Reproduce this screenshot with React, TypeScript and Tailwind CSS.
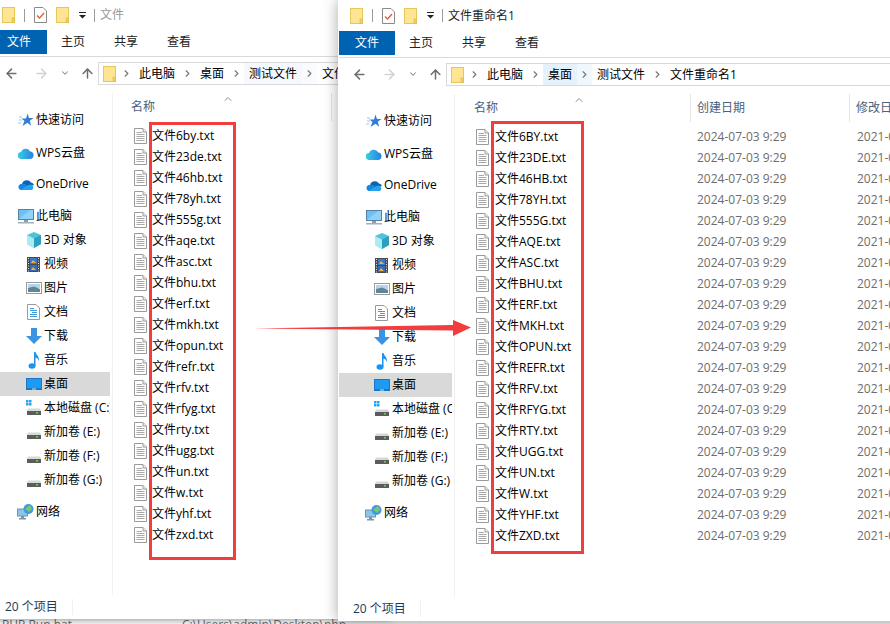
import React from "react";
import { ArrowLeft, ArrowRight, ArrowUp, ChevronDown, ChevronRight, ChevronUp } from "lucide-react";

const FolderIcon = ({ className = "" }: { className?: string }) => (
  <svg width="13" height="16" viewBox="0 0 13 16" className={className}>
    <rect x="0.5" y="0.5" width="12" height="15" fill="#fde594" stroke="#e9c65c" />
    <rect x="10" y="11" width="2.5" height="4.5" fill="#f2cf62" stroke="#e0b844" strokeWidth="0.6" />
  </svg>
);

const CheckDocIcon = () => (
  <svg width="13" height="16" viewBox="0 0 13 16">
    <path d="M0.5 0.5H9L12.5 4V15.5H0.5Z" fill="#fff" stroke="#8a8a8a" />
    <path d="M3 8.5L5.5 11L10 6" fill="none" stroke="#e8592b" strokeWidth="1.3" />
  </svg>
);

const TxtIcon = () => (
  <svg width="13" height="16" viewBox="0 0 13 16" className="shrink-0">
    <path d="M0.5 0.5H9L12.5 4V15.5H0.5Z" fill="#fff" stroke="#9a9a9a" />
    <path d="M9 0.5V4H12.5" fill="#eee" stroke="#9a9a9a" />
    <path d="M2.5 4.5H8M2.5 6.5H10.5M2.5 8.5H10.5M2.5 10.5H10.5M2.5 12.5H10.5" stroke="#a8a8a8" />
  </svg>
);

const StarIcon = () => (
  <svg width="16" height="16" viewBox="0 0 16 16">
    <path d="M9.5 1.5L11 6H15.5L11.8 8.8L13.2 13.8L9.5 10.8L4.5 14L6.5 9L3.5 6.5H8Z" fill="#2f7ed8" />
    <path d="M1 5H4M1 8H4M0 11H3" stroke="#9cc6ee" />
  </svg>
);

const WpsCloudIcon = () => (
  <svg width="16" height="12" viewBox="0 0 16 12">
    <defs>
      <linearGradient id="wps" x1="0" y1="0" x2="1" y2="0">
        <stop offset="0" stopColor="#35d0e0" />
        <stop offset="1" stopColor="#2a7fe6" />
      </linearGradient>
    </defs>
    <path d="M3.5 12A3.5 3.5 0 0 1 3 5A5 5 0 0 1 12.2 4.5A3.8 3.8 0 0 1 12.5 12Z" fill="url(#wps)" />
  </svg>
);

const OneDriveIcon = () => (
  <svg width="18" height="12" viewBox="0 0 18 12">
    <path d="M5 6A5 5 0 0 1 14 4.5A4 4 0 0 1 17 7L9 9Z" fill="#0f63b5" />
    <path d="M3.5 12A3.2 3.2 0 0 1 3.5 6H8L13 12Z" fill="#1687dc" />
    <path d="M4 12L10 7.5L13.5 6.5A3 3 0 0 1 15 12Z" fill="#25a4ee" />
  </svg>
);

const PcIcon = () => (
  <svg width="16" height="15" viewBox="0 0 16 15">
    <rect x="0.5" y="0.5" width="15" height="10" fill="#6cc0f4" stroke="#5b7fa0" />
    <path d="M1 10L12 1H15V10Z" fill="#8fd2f8" />
    <rect x="6" y="11" width="4" height="2" fill="#8aa0b4" />
    <rect x="0" y="13" width="16" height="1.5" fill="#9fb2c2" />
  </svg>
);

const CubeIcon = () => (
  <svg width="14" height="16" viewBox="0 0 14 16">
    <path d="M7 0L14 3V12L7 16L0 12V3Z" fill="#4fc3d9" />
    <path d="M0 3L7 6.5V16L0 12Z" fill="#a8ecf4" />
    <path d="M7 6.5L14 3V12L7 16Z" fill="#2f9fbf" />
  </svg>
);

const VideoIcon = () => (
  <svg width="13" height="15" viewBox="0 0 13 15">
    <rect x="0" y="0" width="13" height="15" fill="#4a4a4a" />
    <path d="M1 1.5H2M1 4H2M1 6.5H2M1 9H2M1 11.5H2M1 14H2M11 1.5H12M11 4H12M11 6.5H12M11 9H12M11 11.5H12M11 14H12" stroke="#ddd" />
    <rect x="3" y="1" width="7" height="6" fill="#3f77c8" />
    <rect x="3" y="8" width="7" height="6" fill="#3c68b4" />
    <path d="M4 6L6 3L9 6M4 13L6 10L9 13" fill="#e5b83c" />
  </svg>
);

const PictureIcon = () => (
  <svg width="16" height="12" viewBox="0 0 16 12">
    <rect x="0.5" y="0.5" width="15" height="11" fill="#fff" stroke="#9a9a9a" />
    <rect x="2" y="2" width="12" height="4" fill="#b7d5ea" />
    <path d="M2 6L8 4.5L14 7V10H2Z" fill="#5f8596" />
  </svg>
);

const DocIcon = () => (
  <svg width="13" height="16" viewBox="0 0 13 16">
    <path d="M0.5 0.5H9L12.5 4V15.5H0.5Z" fill="#fff" stroke="#9a9a9a" />
    <path d="M3 4.5H7M3 6.5H10M5 8.5H10M3 10.5H10M3 12.5H10" stroke="#3f9ad8" />
  </svg>
);

const DownloadIcon = () => (
  <svg width="16" height="16" viewBox="0 0 16 16">
    <path d="M5 0H11V8H16L8 16L0 8H5Z" fill="#3b93e4" />
  </svg>
);

const MusicIcon = () => (
  <svg width="12" height="17" viewBox="0 0 12 17">
    <ellipse cx="4" cy="14" rx="3.5" ry="2.7" fill="#1d93ee" />
    <path d="M6 14V0H7.5C8 3 11.5 4 11 9C10 6.5 9 6 7.5 5.5V14Z" fill="#1d93ee" />
  </svg>
);

const DesktopIcon = () => (
  <svg width="16" height="12" viewBox="0 0 16 12">
    <rect x="0" y="0" width="16" height="12" fill="#1976c8" />
    <rect x="1" y="1" width="14" height="9" fill="#1e9af0" />
    <rect x="6" y="10.5" width="4" height="1" fill="#cfe6f8" />
  </svg>
);

const DriveIcon = ({ win = false }: { win?: boolean }) => (
  <svg width="16" height="16" viewBox="0 0 16 16">
    {win && <path d="M0 0H2.5V2.5H0ZM3 0H5.5V2.5H3ZM0 3H2.5V5.5H0ZM3 3H5.5V5.5H3Z" fill="#1ea7f0" />}
    <path d="M2 8.5H14L15 11H1Z" fill="#d8d8d8" />
    <rect x="1" y="11" width="14" height="4" fill="#5c5c5c" />
    <rect x="10" y="12" width="2" height="1.5" fill="#4ae04a" />
  </svg>
);

const NetworkIcon = () => (
  <svg width="17" height="16" viewBox="0 0 17 16">
    <rect x="0.5" y="5" width="10" height="7" fill="#8cc4ea" stroke="#6b93b3" />
    <rect x="4" y="12" width="3" height="2" fill="#7b96ab" />
    <rect x="2" y="14" width="7" height="1.5" fill="#7b96ab" />
    <circle cx="11.5" cy="5" r="5" fill="#3f9ae0" />
    <path d="M8 5C10 3 11 2 13 1L15 5L12 8Z" fill="#7cc46e" />
  </svg>
);

const DropIcon = () => (
  <svg width="9" height="9" viewBox="0 0 9 9">
    <rect x="1" y="1" width="7" height="1" fill="#222" />
    <path d="M1 4H8L4.5 7.5Z" fill="#222" />
  </svg>
);

interface NavRow {
  label: string;
  icon: React.ReactNode;
  className: string;
  active?: boolean;
  child?: boolean;
}

const navRows: NavRow[] = [
  { label: "快速访问", icon: <StarIcon />, className: "" },
  { label: "WPS云盘", icon: <WpsCloudIcon />, className: "mt-[9px]" },
  { label: "OneDrive", icon: <OneDriveIcon />, className: "mt-[7px]" },
  { label: "此电脑", icon: <PcIcon />, className: "mt-[8px]" },
  { label: "3D 对象", icon: <CubeIcon />, className: "", child: true },
  { label: "视频", icon: <VideoIcon />, className: "", child: true },
  { label: "图片", icon: <PictureIcon />, className: "", child: true },
  { label: "文档", icon: <DocIcon />, className: "", child: true },
  { label: "下载", icon: <DownloadIcon />, className: "", child: true },
  { label: "音乐", icon: <MusicIcon />, className: "", child: true },
  { label: "桌面", icon: <DesktopIcon />, className: "", child: true, active: true },
  { label: "本地磁盘 (C:)", icon: <DriveIcon win />, className: "", child: true },
  { label: "新加卷 (E:)", icon: <DriveIcon />, className: "", child: true },
  { label: "新加卷 (F:)", icon: <DriveIcon />, className: "", child: true },
  { label: "新加卷 (G:)", icon: <DriveIcon />, className: "", child: true },
  { label: "网络", icon: <NetworkIcon />, className: "mt-[8px]" },
];

const stems = ["6by", "23de", "46hb", "78yh", "555g", "aqe", "asc", "bhu", "erf", "mkh", "opun", "refr", "rfv", "rfyg", "rty", "ugg", "un", "w", "yhf", "zxd"];

const Sidebar = () => (
  <div className="w-full pt-[15px] pr-[2px]">
    {navRows.map((row) => (
      <div
        key={row.label}
        className={`flex h-6 items-center overflow-hidden whitespace-nowrap text-black ${row.className} ${row.active ? "bg-[#d9d9d9]" : ""} ${row.child ? "pl-[32px]" : "pl-[24px]"}`}
      >
        <span className="flex w-[21px] shrink-0 items-center justify-center">{row.icon}</span>
        <span>{row.label}</span>
      </div>
    ))}
  </div>
);

interface Crumb {
  label: string;
  hover?: "soft" | "strong";
}

const Crumbs = ({ items }: { items: Crumb[] }) => (
  <div className="flex h-full min-w-0 flex-1 items-center overflow-hidden border border-[#d9d9d9] pl-[4px]">
    <FolderIcon className="shrink-0" />
    <ChevronRight size={11} strokeWidth={2.5} className="ml-[5px] mr-[2px] shrink-0 text-[#777]" />
    {items.map((c, i) => (
      <div key={c.label + i} className="flex h-full shrink-0 items-center">
        <span
          className={`flex h-full items-center px-[5px] text-black ${c.hover === "strong" ? "bg-[#e5f1fb]" : c.hover === "soft" ? "bg-[#f5f9fd]" : ""}`}
        >
          {c.label}
        </span>
        <span
          className={`flex h-full w-[15px] items-center justify-center ${c.hover === "strong" ? "bg-[#f0f7fd]" : c.hover === "soft" ? "bg-[#f9fbfe]" : ""}`}
        >
          {i < items.length - 1 && <ChevronRight size={11} strokeWidth={2.5} className="text-[#777]" />}
        </span>
      </div>
    ))}
  </div>
);

interface ExplorerProps {
  className: string;
  title: string;
  crumbs: Crumb[];
  sidebarClass: string;
  nameColClass: string;
  caretClass: string;
  upper?: boolean;
  titleClass: string;
  nameHeadClass: string;
  nameGapClass: string;
  details?: boolean;
}

const Explorer = ({
  className,
  title,
  crumbs,
  sidebarClass,
  nameColClass,
  caretClass,
  upper,
  titleClass,
  nameHeadClass,
  nameGapClass,
  details,
}: ExplorerProps) => (
  <div className={`absolute top-0 flex flex-col overflow-hidden bg-white ${className}`}>
    <div className={`flex shrink-0 items-center pl-[11px] ${titleClass}`}>
      <FolderIcon />
      <span className="mx-[9px] h-[13px] w-px bg-[#9a9a9a]" />
      <CheckDocIcon />
      <span className="ml-[9px]"><FolderIcon /></span>
      <span className="ml-[9px]"><DropIcon /></span>
      <span className="ml-[7px] mr-[5px] h-[13px] w-px bg-[#9a9a9a]" />
      <span className={details ? "text-[#222]" : "text-[#999]"}>{title}</span>
    </div>
    <div className="flex h-6 shrink-0 items-center text-[#222]">
      <div className="flex h-6 w-[56px] items-center justify-center bg-[#0063b1] text-white">文件</div>
      <span className="ml-[14px]">主页</span>
      <span className="ml-[29px]">共享</span>
      <span className="ml-[29px]">查看</span>
    </div>
    <div className="mt-[2px] h-px w-full shrink-0 bg-[#dadada]" />
    <div className="flex h-[36px] shrink-0 items-start pt-[5px]">
      <div className="flex h-[22px] w-[107px] shrink-0 items-center pl-[13px]">
        <ArrowLeft size={15} strokeWidth={2.4} className="text-[#6d6d6d]" />
        <ArrowRight size={15} strokeWidth={2.4} className="ml-[15px] text-[#d2d2d2]" />
        <ChevronDown size={10} strokeWidth={2.5} className="ml-[11px] text-[#8a8a8a]" />
        <ArrowUp size={15} strokeWidth={2.4} className="ml-[10px] text-[#6d6d6d]" />
      </div>
      <div className="h-[23px] min-w-0 flex-1">
        <Crumbs items={crumbs} />
      </div>
    </div>
    <div className="flex min-h-0 flex-1 text-[12px]">
      <div className={`shrink-0 border-r border-[#f0f0f0] ${sidebarClass}`}>
        <Sidebar />
      </div>
      <div className="min-w-0 flex-1">
        <div className="relative flex h-[28px] items-stretch text-[#4c607a]">
          <div className={`relative flex items-center border-r border-[#e5e5e5] ${nameHeadClass} ${nameColClass}`}>
            <span>名称</span>
            <ChevronUp size={12} strokeWidth={1.5} className={`absolute top-0 text-[#666] ${caretClass}`} />
          </div>
          {details && (
            <>
              <div className="flex w-[159px] shrink-0 items-center border-r border-[#e5e5e5] pl-[6px]">创建日期</div>
              <div className="flex items-center pl-[6px] whitespace-nowrap">修改日期</div>
            </>
          )}
        </div>
        <div className="pt-[4px]">
          {stems.map((s) => (
            <div key={s} className="flex h-[21px] items-center whitespace-nowrap">
              <div className={`flex items-center pl-[21px] ${nameColClass}`}>
                <TxtIcon />
                <span className={`text-black ${nameGapClass}`}>{`文件${upper ? s.toUpperCase() : s}.txt`}</span>
              </div>
              {details && (
                <>
                  <span className="w-[160px] shrink-0 pl-[6px] text-[#6d6d6d]">2024-07-03 9:29</span>
                  <span className="shrink-0 pl-[6px] text-[#6d6d6d]">2021-07-03 9:29</span>
                </>
              )}
            </div>
          ))}
        </div>
      </div>
    </div>
    <div className="flex h-[24px] shrink-0 items-center pl-[14px] text-[12px] text-[#1e395b]">
      <span>20 个项目</span>
      <span className="ml-[14px] h-[16px] w-px bg-[#f0f0f0]" />
    </div>
  </div>
);

export default function App() {
  return (
    <div
      className="relative h-[624px] w-[890px] overflow-hidden bg-[#efefef] text-[12px]"
      style={{ fontFamily: '"Open Sans", "Noto Sans CJK SC", sans-serif' }}
    >
      {/* desktop text peeking out under the windows */}
      <div className="absolute left-0 top-[616px] flex w-full text-[12px] text-[#666]">
        <span className="ml-[2px]">PHP Run.bat</span>
        <span className="ml-[110px]">C:\Users\admin\Desktop\php</span>
      </div>

      <Explorer
        className="left-[-9px] z-10 h-[619px] w-[400px] shadow-[0_1px_5px_rgba(0,0,0,0.35)]"
        title="文件"
        crumbs={[{ label: "此电脑" }, { label: "桌面" }, { label: "测试文件", hover: "soft" }, { label: "文件" }]}
        sidebarClass="w-[122px]"
        nameColClass="w-[219px] shrink-0"
        nameHeadClass="pl-[18px]"
        caretClass="left-[109px]"
        titleClass="h-[30px]"
        nameGapClass="ml-[5px]"
      />

      <Explorer
        className="left-[338px] z-20 h-[621px] w-[600px] border-l border-white shadow-[0_0_14px_rgba(0,0,0,0.35)]"
        title="文件重命名1"
        crumbs={[{ label: "此电脑" }, { label: "桌面", hover: "strong" }, { label: "测试文件" }, { label: "文件重命名1" }]}
        sidebarClass="w-[116px]"
        nameColClass="w-[236px] shrink-0"
        nameHeadClass="pl-[19px]"
        caretClass="left-[118px]"
        titleClass="h-[31px]"
        nameGapClass="ml-[6px]"
        upper
        details
      />

      {/* red highlight boxes and arrow drawn on top of the screenshot */}
      <div className="absolute left-[149px] top-[122px] z-30 h-[438px] w-[87px] border-[3px] border-[#f33c3c]" />
      <div className="absolute left-[491px] top-[121px] z-30 h-[433px] w-[93px] border-[3px] border-[#f33c3c]" />
      <svg className="absolute left-[250px] top-[316px] z-30" width="224" height="24" viewBox="0 0 224 24">
        <path d="M2 12.5L203 9V4L221 11.5L203 20V14.5Z" fill="#f33c3c" />
      </svg>
    </div>
  );
}
